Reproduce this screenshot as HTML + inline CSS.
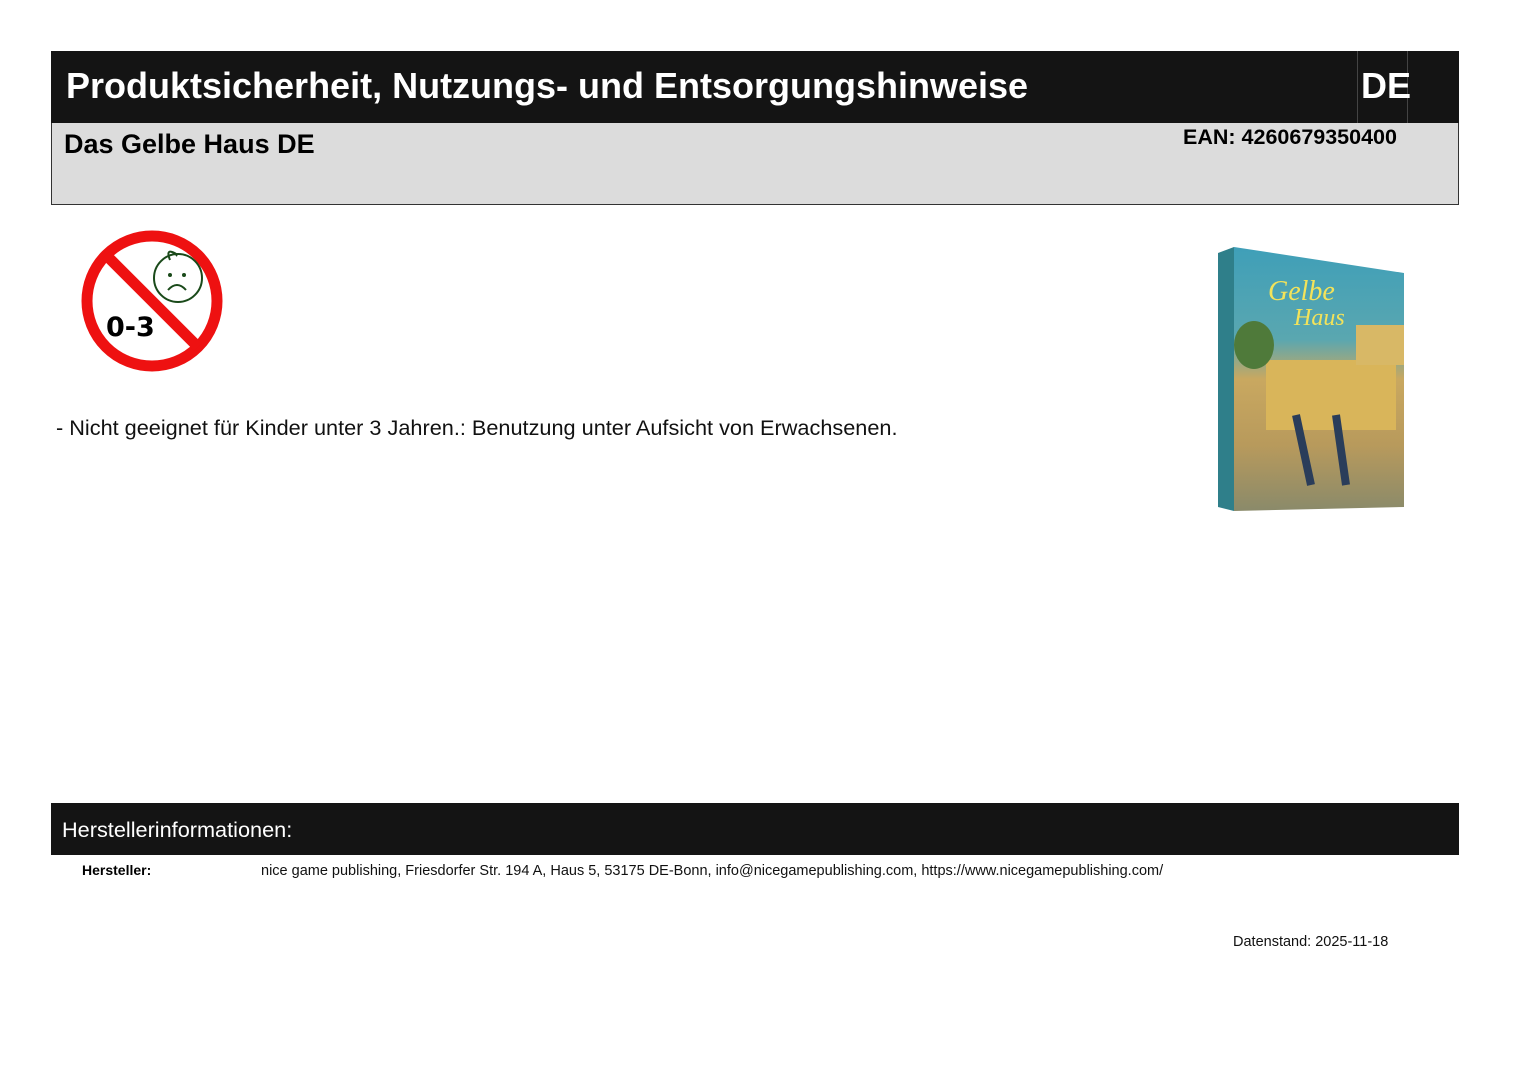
<!DOCTYPE html>
<html><head><meta charset="utf-8"><style>
*{margin:0;padding:0;box-sizing:border-box}
body{width:1520px;height:1075px;background:#fff;position:relative;font-family:"Liberation Sans",Arial,sans-serif;overflow:hidden}
.a{position:absolute}
</style></head><body>
<div class="a" style="left:51px;top:51px;width:1408px;height:73px;background:#141414"></div>
<div class="a" style="left:1357px;top:51px;width:1px;height:73px;background:#444"></div>
<div class="a" style="left:1407px;top:51px;width:1px;height:73px;background:#444"></div>
<div class="a" style="left:66px;top:65px;font-size:36px;font-weight:bold;color:#fff;white-space:nowrap">Produktsicherheit, Nutzungs- und Entsorgungshinweise</div>
<div class="a" style="left:1361px;top:65px;font-size:36px;font-weight:bold;color:#fff">DE</div>
<div class="a" style="left:51px;top:123px;width:1408px;height:82px;background:#dcdcdc;border:1px solid #333;border-top:none"></div>
<div class="a" style="left:64px;top:129px;font-size:27px;font-weight:bold;color:#000;white-space:nowrap">Das Gelbe Haus DE</div>
<div class="a" style="left:1183px;top:125px;font-size:21.5px;font-weight:bold;color:#000;white-space:nowrap">EAN: 4260679350400</div>

<svg class="a" style="left:78px;top:228px" width="150" height="148" viewBox="0 0 150 148">
<circle cx="74" cy="73" r="65" fill="#fff" stroke="#ee1111" stroke-width="11"/>
<line x1="28" y1="27" x2="120" y2="119" stroke="#ee1111" stroke-width="11"/>
<circle cx="100" cy="50" r="24" fill="none" stroke="#1a4a1a" stroke-width="2"/>
<path d="M92 32 Q88 22 94 24 Q100 26 98 28" fill="none" stroke="#1a4a1a" stroke-width="2"/>
<circle cx="92" cy="47" r="2" fill="#1a4a1a"/><circle cx="106" cy="47" r="2" fill="#1a4a1a"/>
<path d="M90 62 Q99 52 108 62" fill="none" stroke="#1a4a1a" stroke-width="2"/>
<text x="28" y="108" font-family="DejaVu Sans,sans-serif" font-weight="bold" font-size="27" fill="#000">0-3</text>
</svg>

<div class="a" style="left:56px;top:415px;font-size:21.7px;color:#111;white-space:nowrap">- Nicht geeignet für Kinder unter 3 Jahren.: Benutzung unter Aufsicht von Erwachsenen.</div>

<svg class="a" style="left:1216px;top:245px" width="192" height="268" viewBox="0 0 192 268">
<defs><linearGradient id="g" x1="0" y1="0" x2="0" y2="1">
<stop offset="0" stop-color="#3f9fb8"/><stop offset="0.35" stop-color="#5aa7b0"/><stop offset="0.5" stop-color="#c9a860"/><stop offset="0.75" stop-color="#b89a5c"/><stop offset="1" stop-color="#8a8a6a"/></linearGradient></defs>
<polygon points="2,8 18,2 18,266 2,262" fill="#2f7f8a"/>
<polygon points="18,2 188,28 188,262 18,266" fill="url(#g)"/>
<rect x="50" y="115" width="130" height="70" fill="#d9b55a"/>
<rect x="140" y="80" width="48" height="40" fill="#d8b866"/>
<ellipse cx="38" cy="100" rx="20" ry="24" fill="#4f7a3a"/>
<path d="M80 170 L95 240 M120 170 L130 240" stroke="#2a3d5a" stroke-width="8"/>
<text x="52" y="55" font-family="Liberation Serif,serif" font-style="italic" font-size="28" fill="#f3e35a">Gelbe</text>
<text x="78" y="80" font-family="Liberation Serif,serif" font-style="italic" font-size="24" fill="#f3e35a">Haus</text>
</svg>

<div class="a" style="left:51px;top:803px;width:1408px;height:52px;background:#141414"></div>
<div class="a" style="left:62px;top:817px;font-size:21.7px;color:#fff;white-space:nowrap">Herstellerinformationen:</div>
<div class="a" style="left:82px;top:862px;font-size:14px;font-weight:bold;color:#000">Hersteller:</div>
<div class="a" style="left:261px;top:863px;font-size:14.5px;color:#111;white-space:nowrap">nice game publishing, Friesdorfer Str. 194 A, Haus 5, 53175 DE-Bonn, info@nicegamepublishing.com, https://www.nicegamepublishing.com/</div>
<div class="a" style="left:1233px;top:934px;font-size:14.5px;color:#111;white-space:nowrap">Datenstand: 2025-11-18</div>
</body></html>
